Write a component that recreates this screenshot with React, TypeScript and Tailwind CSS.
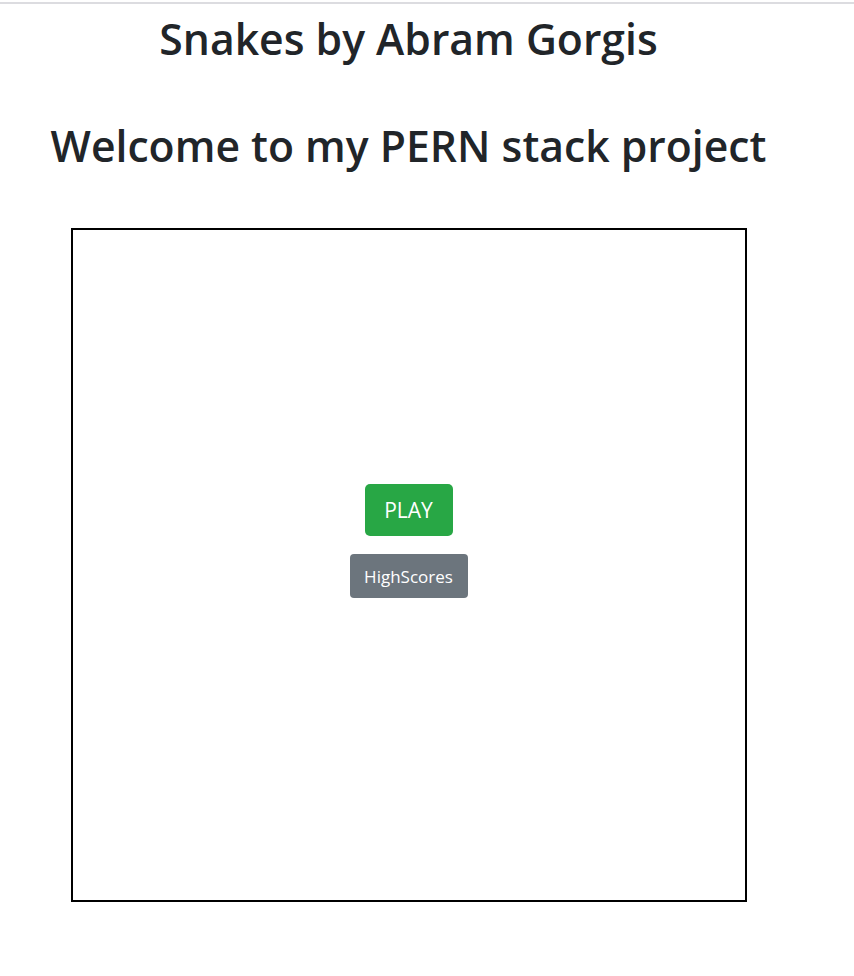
import React from "react";

const App = () => {
  return (
    <div className="min-h-screen bg-white text-[#212529]" style={{ fontFamily: '"Open Sans", "Noto Sans", sans-serif' }}>
      {/* top rule */}
      <div className="mt-[2px] h-[2px] w-full bg-[#dcdce0]" />

      <div className="w-[817px] text-center">
        <h1 className="mt-[9px] text-[42.7px] leading-[1.2] font-semibold">Snakes by Abram Gorgis</h1>
        <h1 className="mt-[56px] text-[42.7px] leading-[1.2] font-semibold">Welcome to my PERN stack project</h1>

        {/* game board */}
        <div className="mx-auto mt-[57px] flex h-[674px] w-[676px] flex-col items-center border-2 border-black pt-[254px]">
          <button className="h-[52px] w-[88px] rounded-[5px] bg-[#28a745] text-[21px] text-white">
            PLAY
          </button>
          <button className="mt-[18px] h-[44px] w-[118px] rounded-[4px] bg-[#6c757d] text-[17px] text-white">
            HighScores
          </button>
        </div>
      </div>
    </div>
  );
};

export default App;
